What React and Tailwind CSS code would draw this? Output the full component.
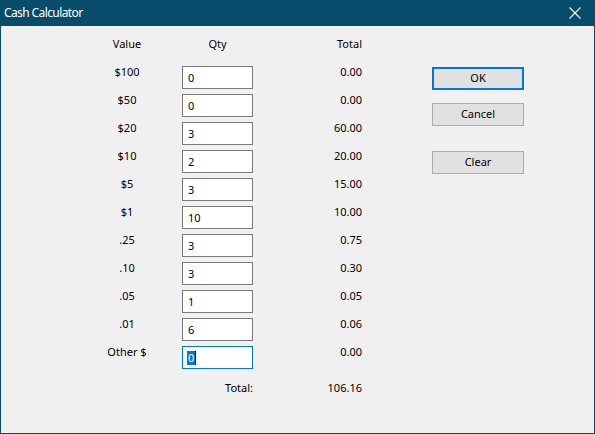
import React from 'react';

const rows = [
  { value: '$100', qty: '0', total: '0.00' },
  { value: '$50', qty: '0', total: '0.00' },
  { value: '$20', qty: '3', total: '60.00' },
  { value: '$10', qty: '2', total: '20.00' },
  { value: '$5', qty: '3', total: '15.00' },
  { value: '$1', qty: '10', total: '10.00' },
  { value: '.25', qty: '3', total: '0.75' },
  { value: '.10', qty: '3', total: '0.30' },
  { value: '.05', qty: '1', total: '0.05' },
  { value: '.01', qty: '6', total: '0.06' },
];

function Btn({ label, primary }) {
  return (
    <div
      className={
        'w-[92px] h-[23px] flex items-center justify-center bg-[#e1e1e1] ' +
        (primary ? 'border-2 border-[#0078d7]' : 'border border-[#adadad]')
      }
    >
      {label}
    </div>
  );
}

export default function App() {
  return (
    <div
      className="w-[595px] h-[434px] flex flex-col border border-t-0 border-[#084c6c] bg-[#f0f0f0] text-[11px] text-black"
      style={{ fontFamily: '"Noto Sans", "Liberation Sans", sans-serif' }}
    >
      {/* title bar */}
      <div className="h-[26px] -mx-px bg-[#084c6c] flex items-center justify-between pl-[4px] pr-[14px] text-white">
        <span className="text-[12px] tracking-[-0.6px]">Cash Calculator</span>
        <svg width="12" height="12" viewBox="0 0 12 12">
          <path d="M0.5 0.5 L11.5 11.5 M11.5 0.5 L0.5 11.5" stroke="#fff" strokeWidth="1.1" />
        </svg>
      </div>

      <div className="flex pl-[89px]">
        <div className="flex flex-col pt-[10px]">
          <div className="flex h-[30px] leading-[16px]">
            <div className="w-[74px] text-center">Value</div>
            <div className="w-[18px]" />
            <div className="w-[71px] text-center">Qty</div>
            <div className="w-[109px] text-right">Total</div>
          </div>
          {rows.map((r) => (
            <div key={r.value} className="flex h-[28px] leading-[12px]">
              <div className="w-[74px] text-center">{r.value}</div>
              <div className="w-[18px]" />
              <div className="w-[71px] h-[23px] bg-white border border-[#7a7a7a] flex items-center pl-[5px]">
                {r.qty}
              </div>
              <div className="w-[109px] text-right">{r.total}</div>
            </div>
          ))}
          <div className="flex h-[28px] leading-[12px]">
            <div className="w-[74px] text-center">Other $</div>
            <div className="w-[18px]" />
            <div className="w-[71px] h-[23px] bg-white border border-[#0078d7] flex items-center pl-[4px]">
              <span className="bg-[#0078d7] text-white leading-[14px] px-px">0</span>
              <span className="w-px h-[14px] bg-black" />
            </div>
            <div className="w-[109px] text-right">0.00</div>
          </div>
          <div className="flex mt-[8px] leading-[12px]">
            <div className="w-[163px] text-right">Total:</div>
            <div className="w-[109px] text-right">106.16</div>
          </div>
        </div>

        <div className="flex flex-col ml-[70px] pt-[41px]">
          <Btn label="OK" primary />
          <div className="mt-[13px]">
            <Btn label="Cancel" />
          </div>
          <div className="mt-[25px]">
            <Btn label="Clear" />
          </div>
        </div>
      </div>
    </div>
  );
}
